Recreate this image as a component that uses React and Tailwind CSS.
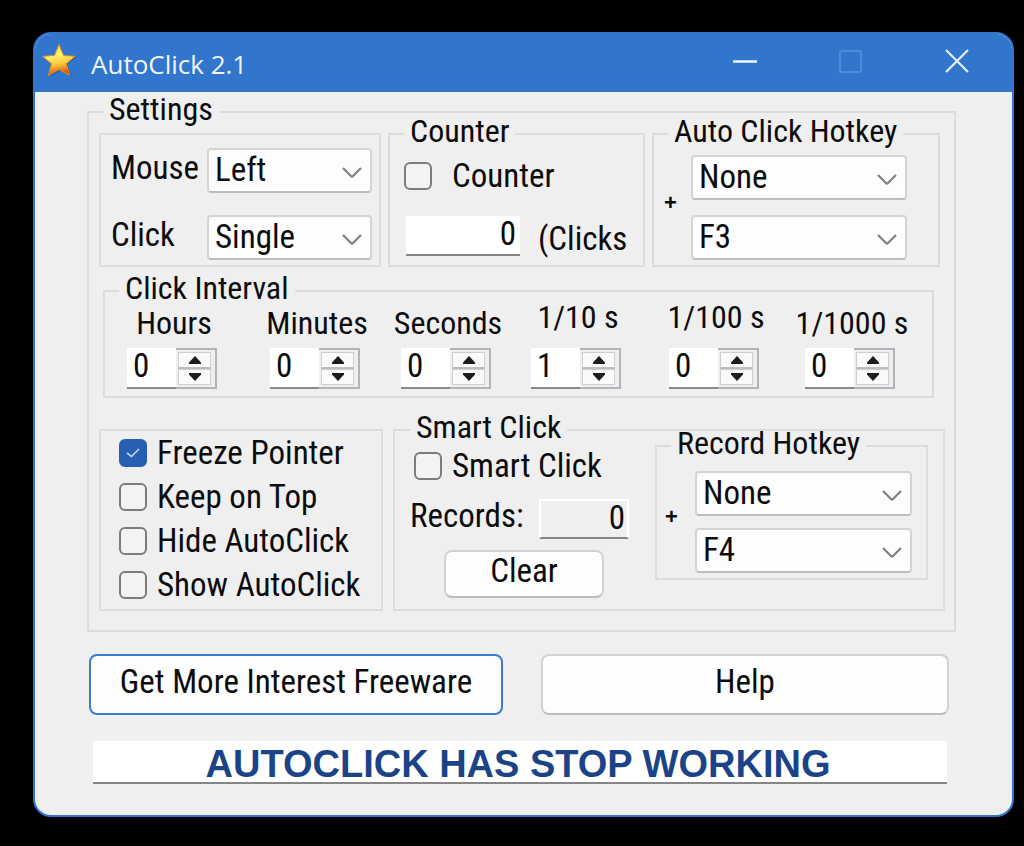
import { useId, useState } from "react";

function Group({ title, className = "", legendClass = "ml-3.5", children }) {
  return (
    <fieldset className={`min-w-0 border-2 border-[#dcdcdc] ${className}`}>
      {title && (
        <legend className={`flex h-0.5 items-center whitespace-nowrap px-1.5 text-[32px] ${legendClass}`}>
          <span className="pb-1.5">{title}</span>
        </legend>
      )}
      {children}
    </fieldset>
  );
}

function Combo({ id, label, options, className = "" }) {
  return (
    <div className={`grid min-w-0 ${className}`}>
      <select
        id={id}
        aria-label={label}
        className="col-start-1 row-start-1 h-[45px] w-full appearance-none rounded border-2 border-[#d4d4d4] border-b-[#bdbdbd] bg-[#fdfdfd] pb-0.5 pl-1.5 pr-9 leading-[38px]"
      >
        {options.map((o) => (
          <option key={o}>{o}</option>
        ))}
      </select>
      <svg
        className="pointer-events-none col-start-1 row-start-1 mr-2.5 mt-1 h-3 w-5 self-center justify-self-end"
        viewBox="0 0 20 12"
        fill="none"
        stroke="#808080"
        strokeWidth="2.2"
        aria-hidden="true"
      >
        <path d="M1 1 9 9Q10 10 11 9L19 1" />
      </svg>
    </div>
  );
}

function Check({ label, checked = false, gap = "gap-2.5" }) {
  return (
    <label className={`flex items-center whitespace-nowrap ${gap}`}>
      <span className="grid shrink-0">
        <input
          type="checkbox"
          defaultChecked={checked}
          className="peer col-start-1 row-start-1 size-7 appearance-none rounded-md border-2 border-[#7c7c7c] bg-[#f3f3f3] checked:border-[#265fb4] checked:bg-[#265fb4]"
        />
        <svg
          className="pointer-events-none invisible col-start-1 row-start-1 h-2.5 w-3.5 self-center justify-self-center peer-checked:visible"
          viewBox="0 0 14 10"
          fill="none"
          stroke="#c3d6ee"
          strokeWidth="1.6"
          aria-hidden="true"
        >
          <path d="M1 5 5.5 8.5 13 1" />
        </svg>
      </span>
      <span>{label}</span>
    </label>
  );
}

function Spinner({ label, initial, raised = false }) {
  const id = useId();
  const [value, setValue] = useState(initial);
  const button =
    "flex flex-1 items-center justify-center border border-[#cfcfcf] bg-[#fafafa]";
  return (
    <div className="flex min-w-0 flex-col items-center">
      <label
        htmlFor={id}
        className={`flex h-11 whitespace-nowrap pl-1 text-[32px] ${raised ? "pt-2" : "pt-3.5"}`}
      >
        {label}
      </label>
      <div className="mt-3 flex h-[41px] w-[90px]">
        <input
          id={id}
          value={value}
          onChange={(e) => setValue(Number(e.target.value) || 0)}
          className="w-[49px] border-b-2 border-[#8b8b86] bg-white pb-1 pl-1.5"
        />
        <span className="flex flex-1 flex-col border-y-2 border-r-2 border-[#b3b3bb] py-0.5 pl-0.5 pr-1">
          <button
            type="button"
            aria-label={`Increase ${label}`}
            onClick={() => setValue(value + 1)}
            className={`${button} border-b-2 border-b-[#bcbcbc]`}
          >
            <svg className="h-2 w-3" viewBox="0 0 12 8" fill="#1c1c1c" aria-hidden="true">
              <path d="M6 0 12 6.5V8H0V6.5Z" />
            </svg>
          </button>
          <button
            type="button"
            aria-label={`Decrease ${label}`}
            onClick={() => setValue(Math.max(0, value - 1))}
            className={button}
          >
            <svg className="h-2 w-3" viewBox="0 0 12 8" fill="#1c1c1c" aria-hidden="true">
              <path d="M0 0H12V1.5L6 8 0 1.5Z" />
            </svg>
          </button>
        </span>
      </div>
    </div>
  );
}

function StarIcon() {
  return (
    <svg className="size-9" viewBox="0 0 36 36" aria-hidden="true">
      <defs>
        <linearGradient id="star" x1="0" y1="0" x2="0.2" y2="1">
          <stop offset="0" stopColor="#ffd84a" />
          <stop offset="0.4" stopColor="#fff670" />
          <stop offset="0.7" stopColor="#ffc83a" />
          <stop offset="1" stopColor="#d9560c" />
        </linearGradient>
      </defs>
      <path
        d="M19 3 23.5 13.5 35 14.2 26.4 21.6 30 33.5 19.5 27.5 9 33.8 12 21.8 2.5 14.5 14.5 13.5Z"
        fill="#1f3f78"
        opacity="0.45"
      />
      <path
        d="M18 1.5 22.6 12.5 34 13.3 25.4 20.8 28.5 32.3 18 26.5 7.5 32.5 10.5 20.8 1.5 13.3 13.5 12.5Z"
        fill="url(#star)"
        stroke="#e08a24"
        strokeWidth="1"
        strokeLinejoin="round"
      />
    </svg>
  );
}

export default function App() {
  return (
    <div className="min-h-screen bg-black pb-7 pl-[33px] pr-2.5 pt-8">
      <main className="overflow-hidden rounded-[18px] border-2 border-[#3275cd] bg-[#efefef] font-['Roboto_Condensed',Roboto,sans-serif] text-[33px] leading-[34px] text-[#0c0c0c]">
        <header className="flex h-[58px] items-center bg-[#3275cd] pb-1 pl-1.5 text-white">
          <StarIcon />
          <h1 className="ml-3.5 flex-1 pt-1.5 font-['Open_Sans',sans-serif] text-[26px] text-[#eef4fc]">
            AutoClick 2.1
          </h1>
          <div className="flex items-center gap-[82px] pr-[43px]">
            <button type="button" aria-label="Minimize">
              <svg className="size-6" viewBox="0 0 24 24" stroke="#f2f6fc" strokeWidth="2.5" aria-hidden="true">
                <path d="M0 12.5H24" />
              </svg>
            </button>
            <button type="button" aria-label="Maximize" disabled>
              <svg className="size-6" viewBox="0 0 24 24" fill="none" stroke="#4b8edb" strokeWidth="2" aria-hidden="true">
                <rect x="1" y="2" width="21" height="21" rx="2" />
              </svg>
            </button>
            <button type="button" aria-label="Close">
              <svg className="size-6" viewBox="0 0 24 24" stroke="#e8effa" strokeWidth="2.2" aria-hidden="true">
                <path d="M1 1 23 23M23 1 1 23" />
              </svg>
            </button>
          </div>
        </header>

        <form className="pb-[31px] pl-[52px] pr-14 pt-[19px]" onSubmit={(e) => e.preventDefault()}>
          <Group title="Settings" className="pb-[19px] pt-5">
            <div className="grid grid-cols-[282fr_257fr_288fr] gap-[7px] pl-2.5 pr-3.5">
              <Group className="pb-[5px] pl-2.5 pr-[7px] pt-[13px]">
                <div className="grid grid-cols-[96px_1fr] items-center gap-y-[22px]">
                  <label htmlFor="mouse" className="pb-1.5">Mouse</label>
                  <Combo id="mouse" options={["Left", "Right", "Middle"]} />
                  <label htmlFor="click" className="pb-1.5">Click</label>
                  <Combo id="click" options={["Single", "Double"]} />
                </div>
              </Group>

              <Group title="Counter" className="pl-3.5" legendClass="ml-0">
                <div className="pt-6">
                  <Check label="Counter" gap="gap-5" />
                </div>
                <div className="mt-[23px] flex items-center gap-[18px] pl-0.5">
                  <input
                    aria-label="Click count"
                    defaultValue="0"
                    className="h-10 w-[114px] border-b-2 border-[#868686] bg-white pb-1 pr-1 text-right"
                  />
                  <span className="pt-1.5">(Clicks</span>
                </div>
              </Group>

              <Group
                title="Auto Click Hotkey"
                className="pl-2.5 pr-[31px] pt-5"
                legendClass="ml-1"
              >
                <div className="flex items-center">
                  <span className="w-[27px] pb-2.5 font-['Liberation_Sans'] text-[22px] font-bold">+</span>
                  <div className="flex flex-1 flex-col gap-[15px]">
                    <Combo label="Auto click modifier" options={["None", "Ctrl", "Alt", "Shift"]} />
                    <Combo label="Auto click key" options={["F3", "F4", "F5"]} />
                  </div>
                </div>
              </Group>
            </div>

            <div className="mt-[23px] pl-3.5 pr-5">
              <Group title="Click Interval" className="pb-[7px] pr-[9px]">
                <div className="grid grid-cols-[134fr_152fr_110fr_150fr_126fr_146fr]">
                  <Spinner label="Hours" initial={0} />
                  <Spinner label="Minutes" initial={0} />
                  <Spinner label="Seconds" initial={0} />
                  <Spinner label="1/10 s" initial={1} raised />
                  <Spinner label="1/100 s" initial={0} raised />
                  <Spinner label="1/1000 s" initial={0} />
                </div>
              </Group>
            </div>

            <div className="mt-[31px] grid grid-cols-[284fr_552fr] gap-2.5 pl-2.5 pr-[9px]">
              <Group className="pb-0.5 pl-[18px]">
                <div className="grid auto-rows-[44px]">
                  <Check label="Freeze Pointer" checked />
                  <Check label="Keep on Top" />
                  <Check label="Hide AutoClick" />
                  <Check label="Show AutoClick" />
                </div>
              </Group>

              <Group title="Smart Click" className="px-[15px]" legendClass="ml-0">
                <div className="flex">
                  <div className="flex-1 pt-[18px]">
                    <div className="pl-1">
                      <Check label="Smart Click" />
                    </div>
                    <div className="mt-4 flex h-10 items-center justify-between pr-[26px]">
                      <label htmlFor="records" className="pb-1.5">Records:</label>
                      <input
                        id="records"
                        readOnly
                        value="0"
                        className="h-10 w-[90px] border-2 border-white border-b-[#868686] bg-[#efefef] pb-1 pr-0.5 text-right"
                      />
                    </div>
                    <button
                      type="button"
                      className="ml-[34px] mt-[11px] h-12 w-40 rounded-lg border-2 border-[#d2d2d2] border-b-[#bdbdbd] bg-[#fdfdfd] pb-1.5"
                    >
                      Clear
                    </button>
                  </div>
                  <Group
                    title="Record Hotkey"
                    className="mt-3.5 h-[135px] w-[273px] pl-2 pr-3.5 pt-6"
                    legendClass="ml-1.5"
                  >
                    <div className="flex items-center">
                      <span className="w-[30px] pb-2.5 font-['Liberation_Sans'] text-[22px] font-bold">+</span>
                      <div className="flex flex-1 flex-col gap-3">
                        <Combo label="Record modifier" options={["None", "Ctrl", "Alt", "Shift"]} />
                        <Combo label="Record key" options={["F4", "F5", "F6"]} />
                      </div>
                    </div>
                  </Group>
                </div>
              </Group>
            </div>
          </Group>

          <div className="mt-[22px] grid grid-cols-[414fr_408fr] gap-[38px] pl-0.5 pr-[7px]">
            <button
              type="button"
              className="h-[61px] whitespace-nowrap rounded-lg border-2 border-[#3b7cd0] bg-[#fdfdfd] pb-1.5"
            >
              Get More Interest Freeware
            </button>
            <button
              type="button"
              className="h-[61px] rounded-lg border-2 border-[#d2d2d2] border-b-[#bdbdbd] bg-[#fdfdfd] pb-1.5"
            >
              Help
            </button>
          </div>

          <div className="mt-[26px] pl-1.5 pr-[9px]">
            <input
              aria-label="Status"
              readOnly
              value="AUTOCLICK HAS STOP WORKING"
              className="h-[43px] w-full border-b-2 border-[#868686] bg-white pr-1 pt-1.5 text-center font-['Liberation_Sans'] text-[38px] font-bold text-[#1b4387]"
            />
          </div>
        </form>
      </main>
    </div>
  );
}
